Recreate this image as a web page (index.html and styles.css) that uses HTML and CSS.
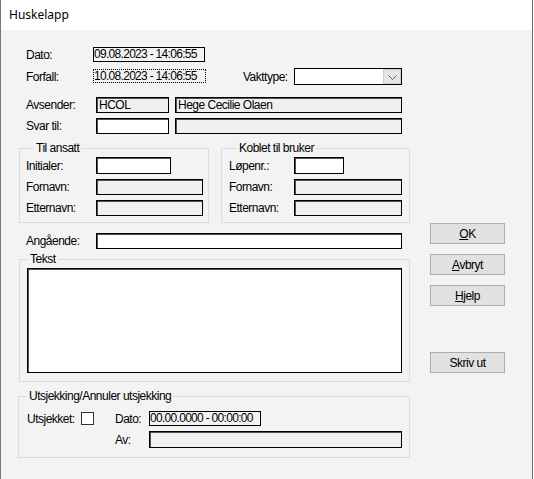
FILE: index.html
```html
<!DOCTYPE html>
<html>
<head>
<meta charset="utf-8">
<title>Huskelapp</title>
<link rel="stylesheet" href="styles.css">
</head>
<body>
<div class="window">
  <div class="titlebar">Huskelapp</div>
  <div class="client">
    <div class="form">
      <div class="row r-dato">
        <span class="lbl w67">Dato:</span>
        <span class="static w112">09.08.2023 - 14:06:55</span>
      </div>
      <div class="row r-forfall">
        <span class="lbl w67">Forfall:</span>
        <span class="focus w113">10.08.2023 - 14:06:55</span>
        <span class="lbl vakt">Vakttype:</span>
        <span class="combo">
          <span class="combo-btn">
            <svg width="9" height="5" viewBox="0 0 9 5"><polyline points="0.5,0.5 4.5,4.5 8.5,0.5" fill="none" stroke="#606060" stroke-width="1"/></svg>
          </span>
        </span>
      </div>
      <div class="row r-avs">
        <span class="lbl w70">Avsender:</span>
        <span class="edit ro w73">HCOL</span>
        <span class="edit ro w227 gap6">Hege Cecilie Olaen</span>
      </div>
      <div class="row r-svar">
        <span class="lbl w70">Svar til:</span>
        <span class="edit w73"></span>
        <span class="edit ro w227 gap6"></span>
      </div>
      <div class="groups">
        <div class="group g-ansatt">
          <div class="legend">Til ansatt</div>
          <div class="grow first">
            <span class="lbl w70">Initialer:</span>
            <span class="edit h17 w75"></span>
          </div>
          <div class="grow">
            <span class="lbl w70">Fornavn:</span>
            <span class="edit ro w107"></span>
          </div>
          <div class="grow">
            <span class="lbl w70">Etternavn:</span>
            <span class="edit ro w107"></span>
          </div>
        </div>
        <div class="group g-bruker">
          <div class="legend">Koblet til bruker</div>
          <div class="grow first">
            <span class="lbl w65">Løpenr.:</span>
            <span class="edit h17 w50"></span>
          </div>
          <div class="grow">
            <span class="lbl w65">Fornavn:</span>
            <span class="edit ro w108"></span>
          </div>
          <div class="grow">
            <span class="lbl w65">Etternavn:</span>
            <span class="edit ro w108"></span>
          </div>
        </div>
      </div>
      <div class="row r-ang">
        <span class="lbl w70">Angående:</span>
        <span class="edit w306"></span>
      </div>
      <div class="group g-tekst">
        <div class="legend">Tekst</div>
        <div class="textarea"></div>
      </div>
      <div class="group g-utsj">
        <div class="legend">Utsjekking/Annuler utsjekking</div>
        <div class="urow first">
          <span class="lbl w54">Utsjekket:</span>
          <span class="check"></span>
          <span class="lbl w34 gap21">Dato:</span>
          <span class="static w112">00.00.0000 - 00:00:00</span>
        </div>
        <div class="urow second">
          <span class="lbl w34">Av:</span>
          <span class="edit ro h17 w253"></span>
        </div>
      </div>
    </div>
    <div class="buttons">
      <div class="btn"><span><u>O</u>K</span></div>
      <div class="btn"><span><u>A</u>vbryt</span></div>
      <div class="btn"><span><u>H</u>jelp</span></div>
      <div class="btn print"><span>Skriv ut</span></div>
    </div>
  </div>
</div>
</body>
</html>
```
FILE: styles.css
```css
* { box-sizing: border-box; }
html, body { margin: 0; padding: 0; }
body {
  background: #ffffff;
  width: 534px;
  height: 479px;
  overflow: hidden;
  font-family: "Liberation Sans", Arial, sans-serif;
  font-size: 12px;
  letter-spacing: -0.5px;
  color: #000;
}
.window {
  width: 533px;
  height: 479px;
  border-left: 1px solid #777;
  border-right: 1px solid #6a6a6a;
  background: #f3f3f3;
}
.titlebar {
  height: 30px;
  background: #fff;
  padding-left: 8px;
  line-height: 30px;
  font-family: "Noto Sans", "Open Sans", sans-serif;
  font-size: 12px;
  letter-spacing: 0;
}
.client {
  display: flex;
  padding-left: 17px;
}
.form { width: 392px; }

.row {
  display: flex;
  align-items: center;
  padding-left: 8px;
}
.lbl { flex: none; white-space: nowrap; line-height: 14px; }
.w34 { width: 34px; }
.w50 { width: 50px; }
.w54 { width: 54px; }
.w65 { width: 65px; }
.w67 { width: 67px; }
.w70 { width: 70px; }
.w73 { width: 73px; }
.w75 { width: 75px; }
.w107 { width: 107px; }
.w108 { width: 108px; }
.w112 { width: 112px; }
.w113 { width: 113px; }
.w227 { width: 227px; }
.w253 { width: 253px; }
.w306 { width: 306px; }
.gap6 { margin-left: 6px; }
.gap21 { margin-left: 21px; }

.r-dato { margin-top: 17px; height: 15px; }
.r-forfall { margin-top: 6px; height: 17px; }
.r-avs { margin-top: 12px; height: 16px; }
.r-svar { margin-top: 5px; height: 16px; }
.r-ang { margin-top: 10px; height: 16px; }

.static {
  flex: none;
  height: 15px;
  border: 1px solid #000;
  padding-left: 0;
  line-height: 13px;
  white-space: nowrap;
  letter-spacing: -0.7px;
}
.focus {
  flex: none;
  height: 14px;
  align-self: flex-start;
  margin-top: 1px;
  border: 1px dotted #000;
  padding-left: 0;
  line-height: 12px;
  white-space: nowrap;
  letter-spacing: -0.7px;
}
.vakt { margin-left: 37px; width: 51px; }
.combo {
  flex: none;
  width: 108px;
  height: 17px;
  border: 1px solid #000;
  background: #fff;
  display: flex;
  justify-content: flex-end;
}
.combo-btn {
  width: 18px;
  height: 15px;
  background: #e6e6e6;
  border: 1px solid #cfcfcf;
  display: flex;
  align-items: center;
  justify-content: center;
  padding-top: 2px;
}
.edit {
  flex: none;
  height: 16px;
  border: 1px solid #000;
  box-shadow: inset 1px 1px 0 #505050;
  background: #fff;
  padding-left: 2px;
  line-height: 14px;
  white-space: nowrap;
}
.edit.ro { background: #f0f0f0; }
.h17 { height: 17px; }

.groups {
  display: flex;
  margin-top: 14px;
}
.group {
  border: 1px solid #dcdcdc;
}
.legend {
  width: fit-content;
  height: 13px;
  line-height: 13px;
  margin-top: -7px;
  margin-left: 8px;
  padding: 0 2px;
  background: #f3f3f3;
  white-space: nowrap;
}
.g-ansatt { margin-left: 1px; width: 190px; height: 75px; padding-left: 6px; }
.g-bruker { margin-left: 12px; width: 189px; height: 75px; padding-left: 7px; }
.grow {
  display: flex;
  align-items: center;
  height: 16px;
  margin-top: 5px;
}
.grow.first { margin-top: 2px; height: 17px; }

.g-tekst {
  margin-top: 10px;
  margin-left: 1px;
  width: 391px;
  height: 123px;
}
.textarea {
  margin-top: 2px;
  margin-left: 7px;
  width: 375px;
  height: 105px;
  border: 1px solid #000;
  box-shadow: inset 1px 1px 0 #505050;
  background: #fff;
}
.g-utsj {
  margin-top: 14px;
  width: 392px;
  height: 62px;
}
.g-utsj .legend { margin-left: 8px; }
.urow {
  display: flex;
  align-items: center;
  height: 15px;
}
.urow.first { margin-top: 8px; padding-left: 8px; }
.urow.second { margin-top: 5px; height: 17px; padding-left: 96px; }
.check {
  flex: none;
  width: 13px;
  height: 13px;
  border: 1px solid #333;
  background: #fff;
}

.buttons {
  margin-left: 20px;
  padding-top: 193px;
  display: flex;
  flex-direction: column;
  gap: 10px;
}
.btn {
  width: 75px;
  height: 21px;
  border: 1px solid #adadad;
  background: #e1e1e1;
  display: flex;
  align-items: center;
  justify-content: center;
}
.btn.print { margin-top: 36px; }
u { text-decoration: underline; text-underline-offset: 1px; }
```
